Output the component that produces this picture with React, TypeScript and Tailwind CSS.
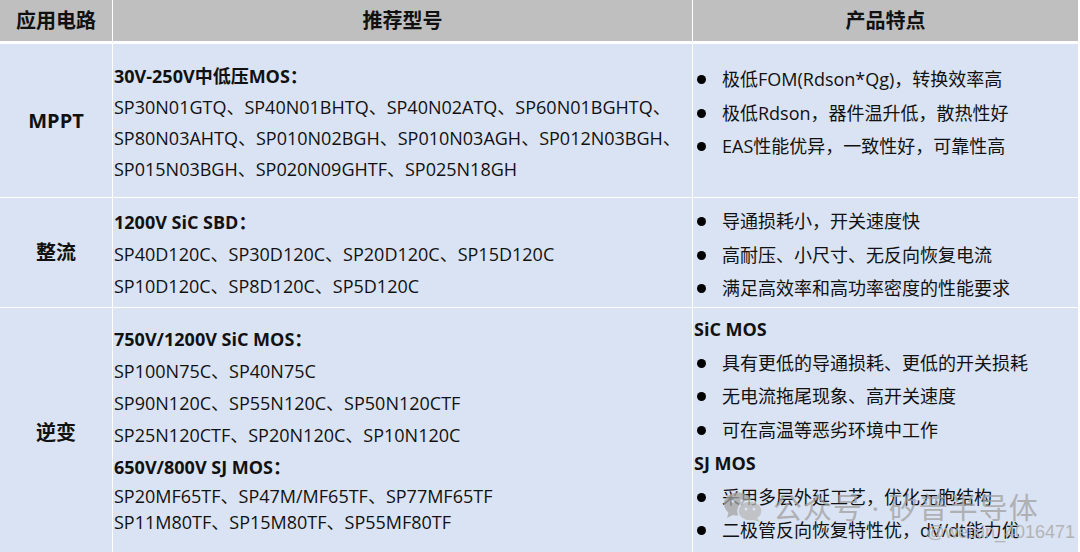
import React from 'react';

type Group = { title: string; lines: string[]; tight?: boolean };
type Feature = { title?: string; items: string[] };

const rows: {
  name: string;
  height: string;
  midPad: string;
  midLeading: string;
  featPad: string;
  groups: Group[];
  features: Feature[];
}[] = [
  {
    name: 'MPPT',
    height: 'h-[153px]',
    midPad: 'pt-[17px]',
    midLeading: 'leading-[31px]',
    featPad: 'pt-[19px]',
    groups: [
      {
        title: '30V-250V中低压MOS：',
        lines: [
          'SP30N01GTQ、SP40N01BHTQ、SP40N02ATQ、SP60N01BGHTQ、',
          'SP80N03AHTQ、SP010N02BGH、SP010N03AGH、SP012N03BGH、',
          'SP015N03BGH、SP020N09GHTF、SP025N18GH',
        ],
      },
    ],
    features: [
      {
        items: ['极低FOM(Rdson*Qg)，转换效率高', '极低Rdson，器件温升低，散热性好', 'EAS性能优异，一致性好，可靠性高'],
      },
    ],
  },
  {
    name: '整流',
    height: 'h-[109px]',
    midPad: 'pt-[8px]',
    midLeading: 'leading-[32px]',
    featPad: 'pt-[7px]',
    groups: [
      {
        title: '1200V SiC SBD：',
        lines: ['SP40D120C、SP30D120C、SP20D120C、SP15D120C', 'SP10D120C、SP8D120C、SP5D120C'],
      },
    ],
    features: [
      {
        items: ['导通损耗小，开关速度快', '高耐压、小尺寸、无反向恢复电流', '满足高效率和高功率密度的性能要求'],
      },
    ],
  },
  {
    name: '逆变',
    height: 'h-[250px]',
    midPad: 'pt-[15px]',
    midLeading: 'leading-[32px]',
    featPad: 'pt-[5px]',
    groups: [
      {
        title: '750V/1200V SiC MOS：',
        lines: ['SP100N75C、SP40N75C', 'SP90N120C、SP55N120C、SP50N120CTF', 'SP25N120CTF、SP20N120C、SP10N120C'],
      },
      {
        title: '650V/800V SJ MOS：',
        lines: ['SP20MF65TF、SP47M/MF65TF、SP77MF65TF', 'SP11M80TF、SP15M80TF、SP55MF80TF'],
        tight: true,
      },
    ],
    features: [
      { title: 'SiC MOS', items: ['具有更低的导通损耗、更低的开关损耗', '无电流拖尾现象、高开关速度', '可在高温等恶劣环境中工作'] },
      { title: 'SJ MOS', items: ['采用多层外延工艺，优化元胞结构', '二极管反向恢复特性优，dV/dt能力优'] },
    ],
  },
];

const WeChatIcon = () => (
  <svg width="40" height="32" viewBox="0 0 40 32" fill="#a4a4a4">
    <ellipse cx="15" cy="13" rx="14" ry="11.5" />
    <path d="M6 20 L4 27 L12 23 Z" />
    <ellipse cx="27" cy="20" rx="12" ry="10" fill="#b8b8b8" stroke="#dae3f3" strokeWidth="1.5" />
    <path d="M34 27 L37 31 L30 29 Z" fill="#b8b8b8" />
    <circle cx="10" cy="10" r="1.8" fill="#dae3f3" />
    <circle cx="19" cy="10" r="1.8" fill="#dae3f3" />
    <circle cx="23" cy="18" r="1.5" fill="#dae3f3" />
    <circle cx="31" cy="18" r="1.5" fill="#dae3f3" />
  </svg>
);

export default function App() {
  return (
    <div className="relative w-[1080px] h-[552px] overflow-hidden bg-white font-['Open_Sans','Noto_Sans_CJK_SC',sans-serif] text-[#111]">
      {/* header */}
      <div className="grid grid-cols-[112px_579px_385px] gap-x-px">
        {['应用电路', '推荐型号', '产品特点'].map((h) => (
          <div key={h} className="h-[41px] bg-[#bfbfbf] flex items-center justify-center text-[20px] font-bold">
            {h}
          </div>
        ))}
      </div>

      {/* body */}
      <div className="mt-[3px] flex flex-col gap-px">
        {rows.map((row) => (
          <div key={row.name} className={`grid grid-cols-[112px_579px_385px] gap-x-px ${row.height}`}>
            <div className="bg-[#dae3f3] flex items-center justify-center text-[20px] font-bold">{row.name}</div>

            <div className={`bg-[#dae3f3] pl-px text-[18px] ${row.midPad} ${row.midLeading}`}>
              {row.groups.map((g) => (
                <div key={g.title}>
                  <div className="font-bold">{g.title}</div>
                  <div className={g.tight ? 'leading-[26px]' : ''}>
                    {g.lines.map((l) => (
                      <div key={l}>{l}</div>
                    ))}
                  </div>
                </div>
              ))}
            </div>

            <div className={`bg-[#dae3f3] pl-px text-[18px] leading-[33.5px] ${row.featPad}`}>
              {row.features.map((f, i) => (
                <div key={i}>
                  {f.title && <div className="font-bold">{f.title}</div>}
                  {f.items.map((it) => (
                    <div key={it} className="flex items-center">
                      <span className="ml-[3px] mr-[16px] w-[9px] h-[9px] rounded-full bg-black shrink-0" />
                      <span>{it}</span>
                    </div>
                  ))}
                </div>
              ))}
            </div>
          </div>
        ))}
      </div>

      {/* watermark */}
      <div className="absolute left-[723px] top-[491px] flex items-center gap-[10px] opacity-75 pointer-events-none">
        <WeChatIcon />
        <span className="text-[29px] leading-none text-[#a0a0a0] tracking-[1px]">公众号 · 矽普半导体</span>
      </div>
      <div className="absolute right-[5px] top-[523px] text-[18px] leading-none text-[#b0b0b0] opacity-90 pointer-events-none font-['Liberation_Sans',sans-serif]">
        @weixin_4016471
      </div>
    </div>
  );
}
